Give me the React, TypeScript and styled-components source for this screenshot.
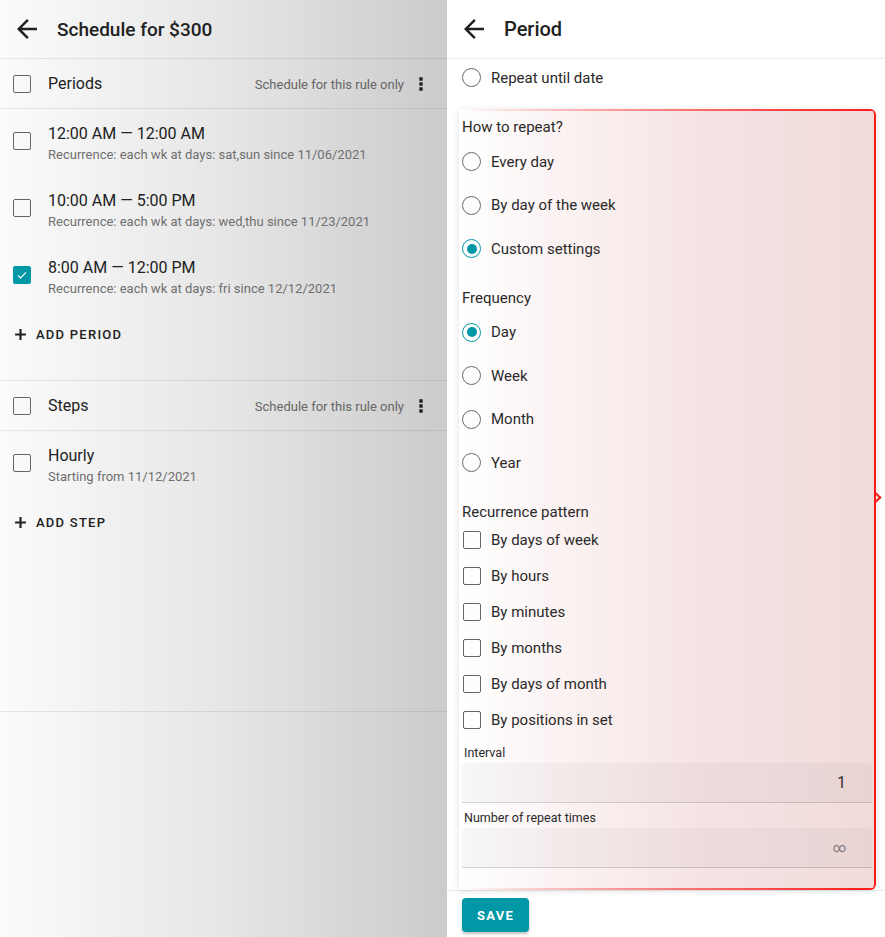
import { createGlobalStyle, styled } from "styled-components";

const GlobalStyle = createGlobalStyle`
  html, body {
    margin: 0;
    padding: 0;
    font-family: Roboto, "Liberation Sans", sans-serif;
    color: #212121;
  }
`;

const TEAL = "#0097a7";

const BackIcon = () => (
  <svg width="30" height="30" viewBox="0 0 24 24">
    <path fill="#212121" d="M20 11H7.83l5.59-5.59L12 4l-8 8 8 8 1.41-1.41L7.83 13H20v-2z" />
  </svg>
);

const MoreIcon = () => (
  <svg width="20" height="20" viewBox="0 0 24 24">
    <path fill="#212121" d="M10 4h4v4h-4zM10 10h4v4h-4zM10 16h4v4h-4z" />
  </svg>
);

const PlusIcon = () => (
  <svg width="13" height="13" viewBox="0 0 24 24">
    <path fill="#212121" d="M22 14h-8v8h-4v-8H2v-4h8V2h4v8h8z" />
  </svg>
);

const CheckIcon = () => (
  <svg width="14" height="14" viewBox="0 0 24 24">
    <path fill="none" stroke="#fff" strokeWidth="2" d="M5 12.5l4.5 4.5L19 7.5" />
  </svg>
);

const periods = [
  { title: "12:00 AM — 12:00 AM", sub: "Recurrence: each wk at days: sat,sun since 11/06/2021", checked: false },
  { title: "10:00 AM — 5:00 PM", sub: "Recurrence: each wk at days: wed,thu since 11/23/2021", checked: false },
  { title: "8:00 AM — 12:00 PM", sub: "Recurrence: each wk at days: fri since 12/12/2021", checked: true },
];

const Box = ({ checked }: { checked?: boolean }) => (
  <CheckBox $checked={checked}>{checked && <CheckIcon />}</CheckBox>
);

const Radio = ({ checked }: { checked?: boolean }) => (
  <RadioCircle $checked={checked}>{checked && <RadioDot />}</RadioCircle>
);

const App = () => {
  return (
    <>
      <GlobalStyle />
      <Page>
        <LeftPanel>
          <Header>
            <IconButton><BackIcon /></IconButton>
            <Title $small>Schedule for $300</Title>
          </Header>

          <Section>
            <SectionHead>
              <Box />
              <HeadLabel>Periods</HeadLabel>
              <HeadNote>Schedule for this rule only</HeadNote>
              <Kebab><MoreIcon /></Kebab>
            </SectionHead>
            {periods.map((p) => (
              <Item key={p.title}>
                <ItemCheck><Box checked={p.checked} /></ItemCheck>
                <ItemText>
                  <ItemTitle>{p.title}</ItemTitle>
                  <ItemSub>{p.sub}</ItemSub>
                </ItemText>
              </Item>
            ))}
            <AddButton><PlusIcon />ADD PERIOD</AddButton>
          </Section>

          <Section $tall>
            <SectionHead>
              <Box />
              <HeadLabel>Steps</HeadLabel>
              <HeadNote>Schedule for this rule only</HeadNote>
              <Kebab><MoreIcon /></Kebab>
            </SectionHead>
            <Item>
              <ItemCheck><Box /></ItemCheck>
              <ItemText>
                <ItemTitle>Hourly</ItemTitle>
                <ItemSub>Starting from 11/12/2021</ItemSub>
              </ItemText>
            </Item>
            <AddButton><PlusIcon />ADD STEP</AddButton>
          </Section>
        </LeftPanel>

        <RightPanel>
          <Header>
            <IconButton><BackIcon /></IconButton>
            <Title>Period</Title>
          </Header>
          <Form>
            <TopRow>
              <Radio />
              <OptionLabel>Repeat until date</OptionLabel>
            </TopRow>

            <Highlight>
              <GroupLabel $top="9px">How to repeat?</GroupLabel>
              <RadioRow><Radio /><OptionLabel>Every day</OptionLabel></RadioRow>
              <RadioRow><Radio /><OptionLabel>By day of the week</OptionLabel></RadioRow>
              <RadioRow><Radio checked /><OptionLabel>Custom settings</OptionLabel></RadioRow>

              <GroupLabel $top="18px">Frequency</GroupLabel>
              {["Day", "Week", "Month", "Year"].map((f) => (
                <RadioRow key={f}><Radio checked={f === "Day"} /><OptionLabel>{f}</OptionLabel></RadioRow>
              ))}

              <GroupLabel $top="18px" $bottom="1px">Recurrence pattern</GroupLabel>
              {["By days of week", "By hours", "By minutes", "By months", "By days of month", "By positions in set"].map((r) => (
                <CheckRow key={r}><SmallBox /><OptionLabel>{r}</OptionLabel></CheckRow>
              ))}

              <FieldLabel>Interval</FieldLabel>
              <Field>1</Field>
              <FieldLabel>Number of repeat times</FieldLabel>
              <Field $muted>∞</Field>
            </Highlight>
          </Form>
          <Footer>
            <SaveButton>SAVE</SaveButton>
          </Footer>
        </RightPanel>
      </Page>
    </>
  );
};

export default App;

const Page = styled.div`
  display: flex;
  width: 885px;
  height: 937px;
  overflow: hidden;
`;

const LeftPanel = styled.div`
  width: 447px;
  flex-shrink: 0;
  height: 100%;
  background: linear-gradient(90deg, #fbfbfb 0%, #e6e6e6 50%, #cbcbcb 100%);
`;

const RightPanel = styled.div`
  width: 438px;
  height: 100%;
  background: #fff;
  display: flex;
  flex-direction: column;
`;

const Header = styled.div`
  height: 58px;
  display: flex;
  align-items: center;
  border-bottom: 1px solid rgba(0, 0, 0, 0.08);
  padding-left: 12px;
`;

const IconButton = styled.div`
  width: 30px;
  height: 30px;
  display: flex;
  margin-right: 15px;
`;

const Title = styled.div<{ $small?: boolean }>`
  font-size: ${(p) => (p.$small ? "19px" : "20px")};
  font-weight: 500;
  color: #212121;
`;

const Section = styled.div<{ $tall?: boolean }>`
  border-bottom: 1px solid rgba(0, 0, 0, 0.08);
  padding-bottom: ${(p) => (p.$tall ? "171px" : "28px")};
`;

const SectionHead = styled.div`
  height: 49px;
  display: flex;
  align-items: center;
  padding: 0 16px 0 13px;
  border-bottom: 1px solid rgba(0, 0, 0, 0.08);
`;

const HeadLabel = styled.div`
  font-size: 16px;
  margin-left: 17px;
  flex: 1;
`;

const HeadNote = styled.div`
  font-size: 13px;
  color: #666;
  margin-right: 7px;
  margin-top: 2px;
`;

const Kebab = styled.div`
  display: flex;
  width: 20px;
  height: 20px;
`;

const CheckBox = styled.div<{ $checked?: boolean }>`
  width: 18px;
  height: 18px;
  box-sizing: border-box;
  border-radius: 2px;
  border: ${(p) => (p.$checked ? "none" : "1.5px solid #666")};
  background: ${(p) => (p.$checked ? TEAL : "transparent")};
  display: flex;
  align-items: center;
  justify-content: center;
  flex-shrink: 0;
`;

const SmallBox = styled.div`
  width: 18px;
  height: 18px;
  box-sizing: border-box;
  border-radius: 2px;
  border: 1.5px solid #666;
  flex-shrink: 0;
  margin-left: 1px;
`;

const Item = styled.div`
  height: 67px;
  box-sizing: border-box;
  padding: 15px 0 0 13px;
  display: flex;
`;

const ItemCheck = styled.div`
  padding-top: 8px;
`;

const ItemText = styled.div`
  margin-left: 17px;
`;

const ItemTitle = styled.div`
  font-size: 16px;
  line-height: 20px;
  color: #212121;
`;

const ItemSub = styled.div`
  font-size: 13px;
  line-height: 18px;
  margin-top: 2px;
  color: #6f6f6f;
`;

const AddButton = styled.div`
  margin-top: 6px;
  height: 36px;
  display: flex;
  align-items: center;
  gap: 9px;
  padding-left: 14px;
  font-size: 13px;
  font-weight: 500;
  letter-spacing: 1.25px;
  color: #212121;
`;

const Form = styled.div`
  padding-left: 15px;
  flex: 1;
`;

const TopRow = styled.div`
  height: 37px;
  display: flex;
  align-items: center;
`;

const RadioCircle = styled.div<{ $checked?: boolean }>`
  width: 19px;
  height: 19px;
  box-sizing: border-box;
  border-radius: 50%;
  border: 1.5px solid ${(p) => (p.$checked ? TEAL : "#6a6a6a")};
  display: flex;
  align-items: center;
  justify-content: center;
  flex-shrink: 0;
`;

const RadioDot = styled.div`
  width: 10px;
  height: 10px;
  border-radius: 50%;
  background: ${TEAL};
`;

const OptionLabel = styled.div`
  font-size: 15px;
  color: #2a2a2a;
  margin-left: 10px;
`;

const Highlight = styled.div`
  position: relative;
  margin: 13px 9px 0 -3px;
  padding: 0 0 22px 3px;
  border-right: 2px solid #ff1a1a;
  border-radius: 0 6px 6px 0;
  background:
    linear-gradient(90deg, rgba(255, 0, 0, 0) 0%, rgba(255, 60, 60, 0.5) 40%, #ff1a1a 100%) top left / 100% 2px no-repeat,
    linear-gradient(90deg, rgba(255, 0, 0, 0) 0%, rgba(255, 60, 60, 0.5) 40%, #ff1a1a 100%) bottom left / 100% 2px no-repeat,
    linear-gradient(90deg, #ffffff 0%, #fbf2f2 25%, #f5e3e3 60%, #f1dada 100%);
  box-shadow: 0 1px 6px rgba(0, 0, 0, 0.12);

  &::after {
    content: "";
    position: absolute;
    right: -6px;
    top: 385px;
    width: 5px;
    height: 5px;
    border-top: 2px solid #ff1a1a;
    border-right: 2px solid #ff1a1a;
    transform: rotate(45deg);
  }
`;

const GroupLabel = styled.div<{ $top: string; $bottom?: string }>`
  font-size: 15px;
  line-height: 18px;
  color: #2a2a2a;
  padding-top: ${(p) => p.$top};
  margin-bottom: ${(p) => p.$bottom ?? "4px"};
`;

const RadioRow = styled.div`
  height: 43.5px;
  display: flex;
  align-items: center;
`;

const CheckRow = styled.div`
  height: 36px;
  display: flex;
  align-items: center;
`;

const FieldLabel = styled.div`
  font-size: 12.5px;
  line-height: 16px;
  color: #2a2a2a;
  margin: 7px 0 2px 2px;
`;

const Field = styled.div<{ $muted?: boolean }>`
  height: 40px;
  box-sizing: border-box;
  margin-right: 2px;
  border-radius: 4px 4px 0 0;
  background: rgba(0, 0, 0, 0.03);
  border-bottom: 1px solid rgba(0, 0, 0, 0.14);
  display: flex;
  align-items: center;
  justify-content: flex-end;
  padding-right: 26px;
  font-size: ${(p) => (p.$muted ? "13px" : "16px")};
  color: ${(p) => (p.$muted ? "#777" : "#333")};
`;

const Footer = styled.div`
  border-top: 1px solid rgba(0, 0, 0, 0.08);
  padding: 7px 15px 5px;
`;

const SaveButton = styled.div`
  width: 67px;
  height: 34px;
  border-radius: 4px;
  background: ${TEAL};
  color: #fff;
  font-size: 13px;
  font-weight: 700;
  letter-spacing: 1.2px;
  display: flex;
  align-items: center;
  justify-content: center;
  box-shadow: 0 2px 3px rgba(0, 0, 0, 0.25);
`;
